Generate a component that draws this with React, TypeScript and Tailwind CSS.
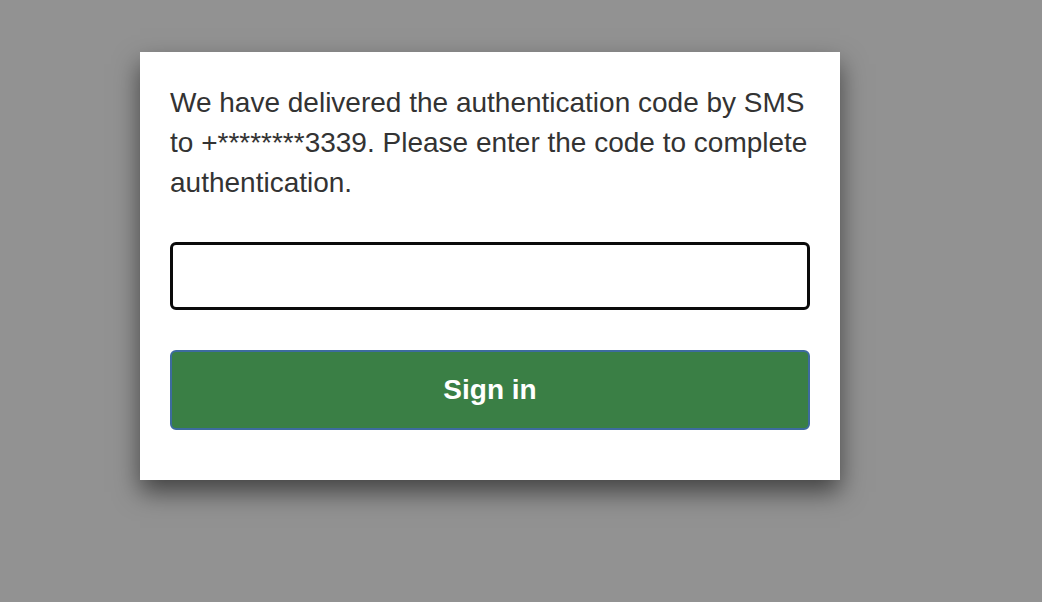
export default function App() {
  return (
    <div className="min-h-[602px] w-full bg-[#929292] pt-[52px] pl-[140px] font-['Liberation_Sans',Arial,sans-serif]">
      <div className="w-[700px] bg-white px-[30px] pt-[31px] pb-[50px] shadow-[0_12px_24px_rgba(0,0,0,0.55)]">
        <p className="text-[28px] leading-[40px] text-[#333333]">
          We have delivered the authentication code by SMS to +********3339. Please enter the code to complete authentication.
        </p>
        <input
          type="text"
          className="mt-[39px] block h-[68px] w-full rounded-[6px] border-[3px] border-[#0a0a0a] bg-white px-3 text-[24px] outline-none"
        />
        <button
          type="button"
          className="mt-[40px] flex h-[80px] w-full items-center justify-center rounded-[6px] border-2 border-[#3d6b9e] bg-[#3a7f45] text-[28px] font-bold text-white"
        >
          Sign in
        </button>
      </div>
    </div>
  )
}
